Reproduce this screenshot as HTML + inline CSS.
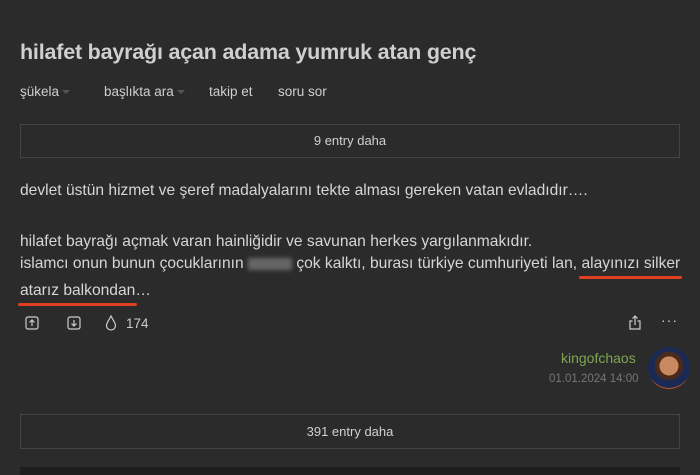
<!DOCTYPE html>
<html><head><meta charset="utf-8"><style>
body{margin:0;width:700px;height:475px;background:#2b2b2b;font-family:"Liberation Sans",sans-serif;color:#d6d6d6;position:relative;overflow:hidden}
.a{position:absolute;white-space:nowrap}
h1{position:absolute;left:20px;top:40px;margin:0;font-size:21.5px;font-weight:bold;color:#cfcfcf;letter-spacing:-0.2px}
.nav{font-size:13.5px;color:#cfcfcf;top:84px}
.car{display:inline-block;border-left:4px solid transparent;border-right:4px solid transparent;border-top:4px solid #555;vertical-align:middle;margin-left:3px}
.box{position:absolute;left:20px;width:658px;border:1px solid #444;background:#2b2b2b;font-size:13px;text-align:center;color:#d0d0d0}
.t{font-size:15.6px;color:#d6d6d6;left:20px}
.u{position:relative}
.u:after{content:"";position:absolute;left:-2px;right:-2px;bottom:-7px;height:3px;background:#e0401f;border-radius:2px}
</style></head><body>
<h1>hilafet bayrağı açan adama yumruk atan genç</h1>
<div class="a nav" style="left:20px">şükela<span class="car"></span></div>
<div class="a nav" style="left:104px">başlıkta ara<span class="car"></span></div>
<div class="a nav" style="left:209px">takip et</div>
<div class="a nav" style="left:278px">soru sor</div>
<div class="box" style="top:124px;height:32px;line-height:32px">9 entry daha</div>
<div class="a t" style="top:182px">devlet üstün hizmet ve şeref madalyalarını tekte alması gereken vatan evladıdır….</div>
<div class="a t" style="top:233px">hilafet bayrağı açmak varan hainliğidir ve savunan herkes yargılanmakıdır.</div>
<div class="a t" style="top:255px">islamcı onun bunun çocuklarının <span style="display:inline-block;width:44px;height:12px;background:#666;filter:blur(2px);vertical-align:middle"></span> çok kalktı, burası türkiye cumhuriyeti lan, <span class="u">alayınızı silker</span></div>
<div class="a t" style="top:282px"><span class="u">atarız balkondan</span>…</div>
<svg class="a" style="left:25px;top:316px" width="14" height="14" viewBox="0 0 14 14" fill="none" stroke="#ccc" stroke-width="1.2"><rect x="1" y="1" width="12" height="12" rx="2"/><path d="M7 10V4M4.5 6.5L7 4l2.5 2.5"/></svg>
<svg class="a" style="left:67px;top:316px" width="14" height="14" viewBox="0 0 14 14" fill="none" stroke="#ccc" stroke-width="1.2"><rect x="1" y="1" width="12" height="12" rx="2"/><path d="M7 4v6M4.5 7.5L7 10l2.5-2.5"/></svg>
<svg class="a" style="left:105px;top:315px" width="12" height="16" viewBox="0 0 12 16" fill="none" stroke="#ccc" stroke-width="1.2"><path d="M6 1C4 5 1.5 8 1.5 10.5a4.5 4.5 0 009 0C10.5 8 8 5 6 1z"/></svg>
<div class="a" style="left:126px;top:316px;font-size:13.5px;color:#ccc">174</div>
<svg class="a" style="left:628px;top:315px" width="14" height="16" viewBox="0 0 14 16" fill="none" stroke="#ccc" stroke-width="1.2"><path d="M7 10V1M4.5 3.5L7 1l2.5 2.5M4.5 6H2v8h10V6H9.5"/></svg>
<div class="a" style="left:661px;top:312px;font-size:14px;color:#ccc;letter-spacing:1px">···</div>
<div class="a" style="left:561px;top:350px;font-size:14px;color:#7fa650">kingofchaos</div>
<div class="a" style="left:549px;top:373px;font-size:11.5px;color:#777">01.01.2024 14:00</div>
<div class="a" style="left:648px;top:347px;width:42px;height:42px;border-radius:50%;background:radial-gradient(circle at 50% 45%,#c98a62 0 30%,#4a2a1c 31% 45%,#1a2a55 46% 70%,#d2542a 71%)"></div>
<div class="box" style="top:414px;height:33px;line-height:33px">391 entry daha</div>
<div class="a" style="left:20px;top:467px;width:660px;height:8px;background:#1e1e1e"></div>
</body></html>
